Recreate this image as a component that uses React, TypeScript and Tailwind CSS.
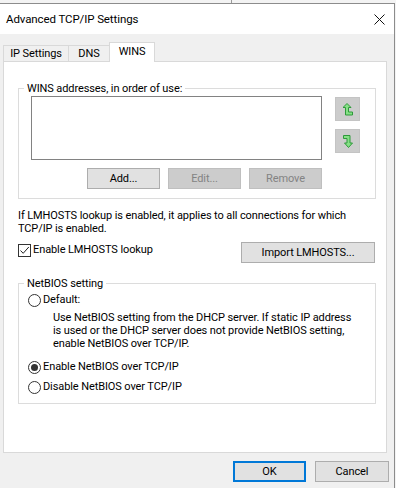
import React from "react";

const UpIcon = () => (
  <svg width="10" height="13" viewBox="0 0 10 13">
    <polygon
      points="4,0.5 8,4.5 5.5,4.5 5.5,9 9.5,9 9.5,12 2.5,12 2.5,4.5 0,4.5"
      fill="#86e086"
      stroke="#2e9a3a"
      strokeWidth="1"
      strokeLinejoin="miter"
    />
  </svg>
);

const DownIcon = () => (
  <svg width="10" height="13" viewBox="0 0 10 13">
    <polygon
      points="0.5,0.5 7,0.5 7,8 9.5,8 5.5,12.5 1.5,8 4,8 4,3.5 0.5,3.5"
      fill="#86e086"
      stroke="#2e9a3a"
      strokeWidth="1"
      strokeLinejoin="miter"
    />
  </svg>
);

const Radio = ({ checked }: { checked?: boolean }) => (
  <span className="w-[13px] h-[13px] rounded-full border border-[#333333] bg-white flex items-center justify-center shrink-0">
    {checked && <span className="w-[7px] h-[7px] rounded-full bg-[#333333]" />}
  </span>
);

export default function App() {
  return (
    <div className="w-[396px] h-[488px] overflow-hidden bg-[#f3f3f3] text-black text-[11px] tracking-[-0.1px] font-['Roboto','Noto_Sans',sans-serif]">
      <div className="h-[3px] flex">
        <div className="w-[232px] border-r border-[#9a9a9a]" />
      </div>
      <div className="w-[395px] h-[485px] flex flex-col border-t border-r border-[#8c8c8c] bg-[#f0f0f0]">
        {/* Title bar */}
        <div className="h-[30px] bg-white flex items-center justify-between pl-[6px] pr-[9px] shrink-0">
          <span className="text-[11.5px] leading-[16px]">Advanced TCP/IP Settings</span>
          <svg width="11" height="11" viewBox="0 0 11 11">
            <path d="M0.5 0.5 L10.5 10.5 M10.5 0.5 L0.5 10.5" stroke="#111" strokeWidth="1" />
          </svg>
        </div>

        {/* Body */}
        <div className="flex flex-col pl-[3px]">
          {/* Tabs */}
          <div className="h-[27px] flex items-end relative z-10">
            <div className="h-[16px] w-[65px] border-t border-l border-[#d9d9d9] bg-[#f0f0f0] flex items-center justify-center leading-[14px]">
              IP Settings
            </div>
            <div className="h-[16px] w-[41px] border-t border-l border-[#d9d9d9] bg-[#f0f0f0] flex items-center justify-center leading-[14px]">
              DNS
            </div>
            <div className="h-[20px] w-[46px] -mb-px border-t border-l border-r border-[#d9d9d9] bg-white flex items-start justify-center pt-[2px] leading-[14px]">
              WINS
            </div>
          </div>

          {/* Panel */}
          <div className="w-[384px] h-[392px] border border-[#d9d9d9] bg-white pl-[14px] pr-[10px] pt-[19px] flex flex-col">
            <fieldset className="border border-[#dcdcdc] pb-[9px]">
              <legend className="ml-[5px] px-[3px] leading-[15px]">WINS addresses, in order of use:</legend>
              <div className="flex pl-[12px]">
                <div className="flex flex-col w-[291px]">
                  <div className="h-[64px] border border-[#828282] bg-white" />
                  <div className="flex justify-end gap-[8px] mt-[8px]">
                    <button className="w-[73px] h-[21px] bg-[#e1e1e1] border border-[#adadad] leading-[15px]">Add...</button>
                    <button className="w-[73px] h-[21px] bg-[#cccccc] border border-[#bfbfbf] text-[#838383] leading-[15px]">Edit...</button>
                    <button className="w-[73px] h-[21px] bg-[#cccccc] border border-[#bfbfbf] text-[#838383] leading-[15px]">Remove</button>
                  </div>
                </div>
                <div className="flex flex-col gap-[8px] ml-[13px] mt-[1px]">
                  <div className="w-[25px] h-[24px] bg-[#cccccc] border border-[#c4c4c4] flex items-center justify-center">
                    <UpIcon />
                  </div>
                  <div className="w-[25px] h-[24px] bg-[#cccccc] border border-[#c4c4c4] flex items-center justify-center">
                    <DownIcon />
                  </div>
                </div>
              </div>
            </fieldset>

            <p className="mt-[10px] leading-[13px]">
              If LMHOSTS lookup is enabled, it applies to all connections for which
              <br />
              TCP/IP is enabled.
            </p>

            <div className="mt-[7px] flex items-start justify-between pr-[1px]">
              <div className="flex items-center gap-[2px] mt-[1px]">
                <span className="w-[13px] h-[13px] border border-[#333333] bg-white flex items-center justify-center shrink-0">
                  <svg width="11" height="11" viewBox="0 0 11 11">
                    <path d="M1.5 5.5 L4.2 8.3 L9.8 2" fill="none" stroke="#222" strokeWidth="1" />
                  </svg>
                </span>
                <span className="leading-[14px]">Enable LMHOSTS lookup</span>
              </div>
              <button className="w-[134px] h-[21px] bg-[#e1e1e1] border border-[#adadad] leading-[15px]">Import LMHOSTS...</button>
            </div>

            <fieldset className="mt-[13px] border border-[#dcdcdc] pb-[8px]">
              <legend className="ml-[5px] px-[3px] leading-[15px]">NetBIOS setting</legend>
              <div className="pl-[9px] pt-[1px] flex flex-col">
                <div className="h-[16px] flex items-center gap-[2px]">
                  <Radio />
                  <span className="leading-[14px]">Default:</span>
                </div>
                <p className="pl-[25px] mt-[3px] leading-[13px]">
                  Use NetBIOS setting from the DHCP server. If static IP address
                  <br />
                  is used or the DHCP server does not provide NetBIOS setting,
                  <br />
                  enable NetBIOS over TCP/IP.
                </p>
                <div className="h-[16px] mt-[9px] flex items-center gap-[2px]">
                  <Radio checked />
                  <span className="leading-[14px]">Enable NetBIOS over TCP/IP</span>
                </div>
                <div className="h-[16px] mt-[4px] flex items-center gap-[2px]">
                  <Radio />
                  <span className="leading-[14px]">Disable NetBIOS over TCP/IP</span>
                </div>
              </div>
            </fieldset>
          </div>

          {/* Footer */}
          <div className="flex justify-end gap-[9px] pt-[8px] pr-[5px]">
            <button className="w-[73px] h-[21px] bg-[#e1e1e1] border-2 border-[#0078d7] leading-[15px]">OK</button>
            <button className="w-[74px] h-[21px] bg-[#e1e1e1] border border-[#adadad] leading-[15px]">Cancel</button>
          </div>
        </div>
      </div>
    </div>
  );
}
